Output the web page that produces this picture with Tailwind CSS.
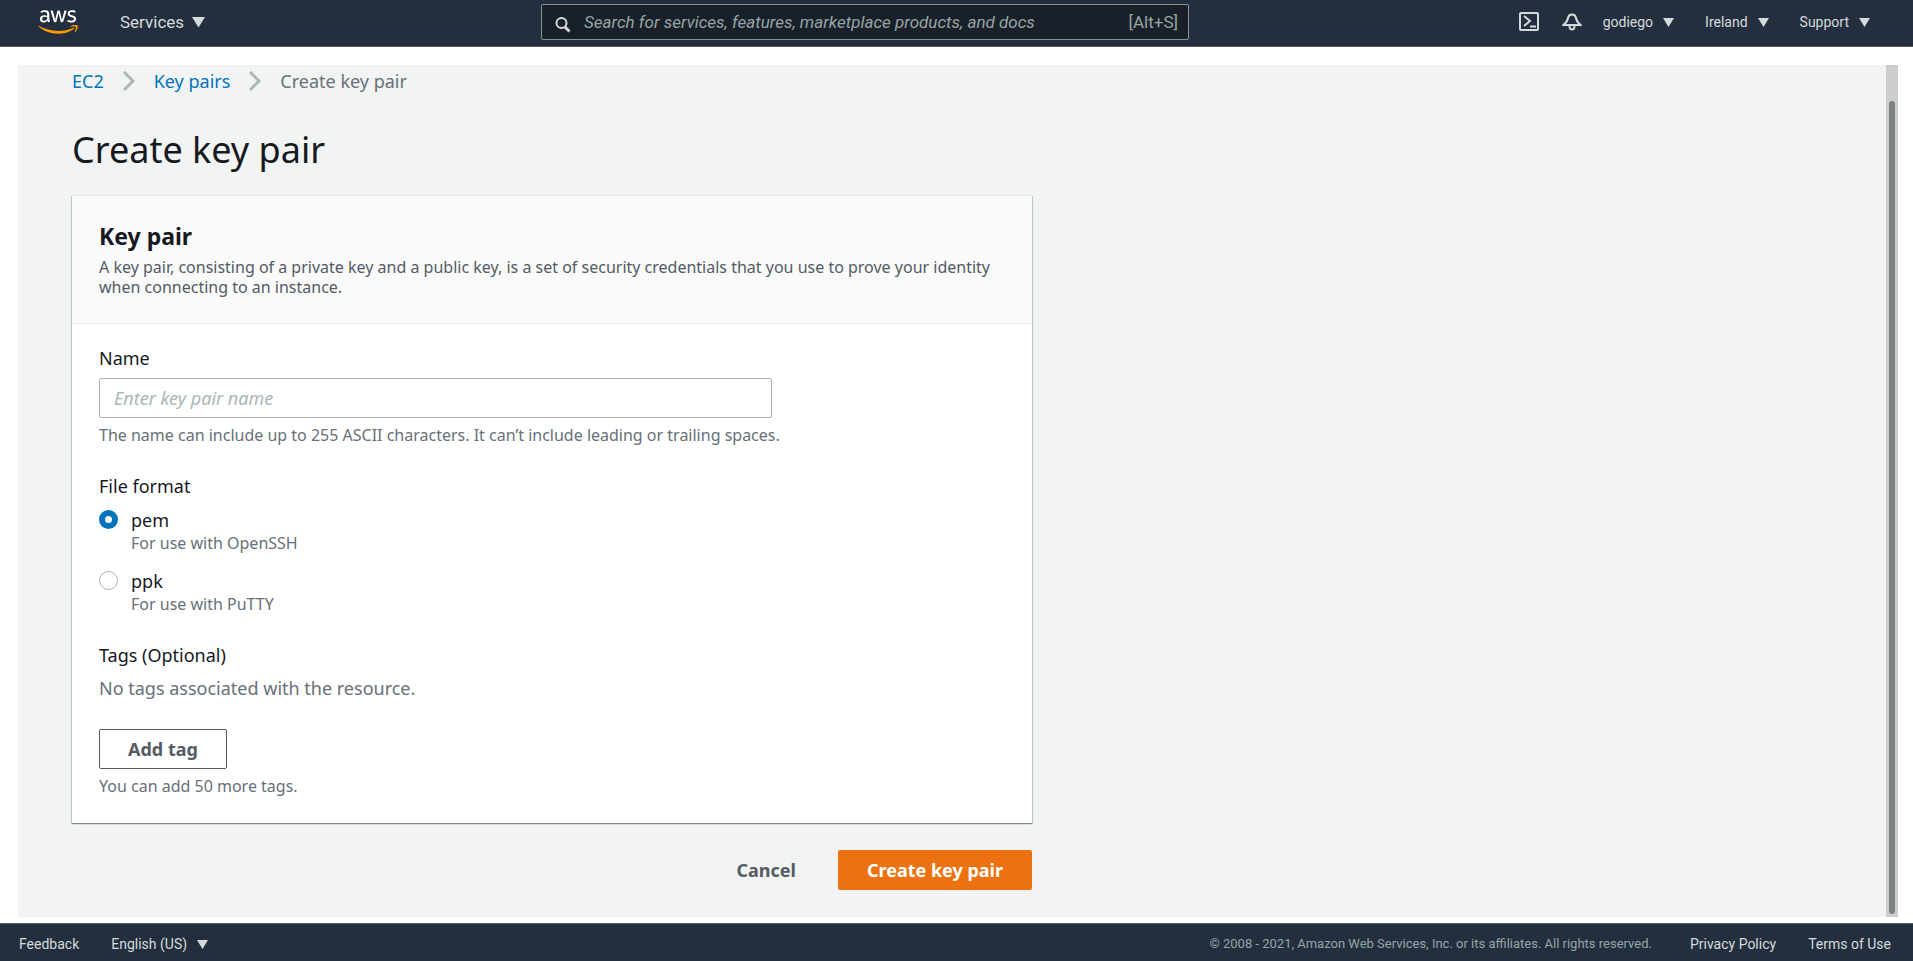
<!DOCTYPE html>
<html lang="en">
<head>
<meta charset="utf-8">
<title>Create key pair</title>
<script src="https://cdn.jsdelivr.net/npm/@tailwindcss/browser@4"></script>
</head>
<body class="flex h-screen flex-col overflow-hidden bg-white font-['Noto_Sans',sans-serif] text-[#16191f]">

<header class="flex h-[47px] shrink-0 items-center border-b border-[#545b64] bg-[#232f3e] pb-[2px] font-[Roboto,sans-serif] text-[#d5dbdb]">
  <div class="flex w-[541px] shrink-0 items-center gap-[42px] pl-[38px]">
    <a href="#" aria-label="AWS home">
      <svg class="block h-6 w-10" viewBox="0 0 304 182" aria-hidden="true">
        <path fill="#fff" d="M86.4 66.4c0 3.7.4 6.7 1.1 8.900.8 2.200 1.800 4.600 3.200 7.200.5.8.7 1.600.7 2.300 0 1-.6 2-1.900 3l-6.300 4.200c-.9.6-1.800.9-2.600.9-1 0-2-.5-3-1.400-1.400-1.500-2.600-3.100-3.600-4.700-1-1.700-2-3.600-3.100-5.900-7.800 9.200-17.600 13.800-29.400 13.800-8.400 0-15.100-2.400-20-7.200-4.900-4.800-7.400-11.200-7.400-19.200 0-8.500 3-15.400 9.100-20.600 6.100-5.200 14.200-7.800 24.500-7.800 3.400 0 6.900.3 10.600.8 3.700.5 7.500 1.300 11.500 2.200v-7.300c0-7.600-1.600-12.900-4.700-16-3.200-3.100-8.600-4.600-16.300-4.600-3.500 0-7.100.4-10.800 1.300-3.700.9-7.300 2-10.800 3.400-1.600.7-2.800 1.100-3.500 1.300-.7.2-1.200.3-1.600.3-1.400 0-2.100-1-2.100-3.100v-4.900c0-1.600.2-2.800.7-3.500.5-.7 1.400-1.400 2.800-2.100 3.500-1.800 7.700-3.300 12.600-4.500 4.900-1.300 10.100-1.900 15.600-1.900 11.900 0 20.600 2.700 26.200 8.100 5.500 5.400 8.300 13.600 8.300 24.600v32.400zM45.800 81.600c3.300 0 6.700-.6 10.300-1.800 3.600-1.200 6.800-3.400 9.500-6.400 1.600-1.900 2.800-4 3.400-6.400.6-2.400 1-5.300 1-8.700v-4.200c-2.900-.7-6-1.300-9.200-1.700-3.200-.4-6.300-.6-9.400-.6-6.700 0-11.600 1.300-14.900 4-3.300 2.700-4.900 6.500-4.900 11.500 0 4.700 1.200 8.200 3.700 10.600 2.400 2.500 5.900 3.700 10.500 3.700zM126.100 92.400c-1.800 0-3-.3-3.800-1-.8-.6-1.500-2-2.100-3.900L96.700 10.200c-.6-2-.9-3.300-.9-4 0-1.600.8-2.500 2.400-2.500h9.800c1.900 0 3.200.3 3.900 1 .8.6 1.400 2 2 3.900l16.800 66.200 15.600-66.200c.5-2 1.100-3.300 1.900-3.900.8-.6 2.200-1 4-1h8c1.900 0 3.200.3 4 1 .8.6 1.500 2 1.900 3.900l15.800 67 17.300-67c.6-2 1.300-3.300 2-3.900.8-.6 2.100-1 3.900-1h9.300c1.600 0 2.500.8 2.500 2.500 0 .5-.1 1-.2 1.600-.1.600-.3 1.400-.7 2.500l-24.100 77.300c-.6 2-1.300 3.300-2.100 3.900-.8.6-2.100 1-3.800 1h-8.600c-1.900 0-3.200-.3-4-1-.8-.7-1.500-2-1.900-4L156 23l-15.400 64.400c-.5 2-1.100 3.300-1.900 4-.8.7-2.200 1-4 1zM254.600 95.100c-5.200 0-10.400-.6-15.400-1.800-5-1.200-8.900-2.500-11.500-4-1.600-.9-2.700-1.900-3.100-2.800-.4-.9-.6-1.900-.6-2.800v-5.100c0-2.100.8-3.100 2.300-3.100.6 0 1.200.1 1.800.3.600.2 1.500.6 2.500 1 3.400 1.500 7.100 2.700 11 3.500 4 .8 7.900 1.200 11.900 1.200 6.300 0 11.200-1.100 14.600-3.300 3.400-2.200 5.200-5.400 5.200-9.500 0-2.800-.9-5.100-2.700-7-1.800-1.900-5.200-3.600-10.100-5.200L246 52c-7.300-2.300-12.700-5.700-16-10.200-3.300-4.400-5-9.300-5-14.500 0-4.200.9-7.900 2.700-11.100 1.800-3.200 4.200-6 7.200-8.200 3-2.300 6.400-4 10.400-5.200 4-1.200 8.200-1.700 12.600-1.700 2.200 0 4.500.1 6.700.4 2.300.3 4.400.7 6.500 1.100 2 .5 3.900 1 5.700 1.600 1.800.6 3.200 1.200 4.200 1.800 1.400.8 2.400 1.600 3 2.500.6.8.9 1.900.9 3.300v4.700c0 2.100-.8 3.200-2.300 3.200-.8 0-2.100-.4-3.800-1.200-5.700-2.600-12.100-3.900-19.200-3.900-5.700 0-10.200.9-13.300 2.800-3.100 1.900-4.700 4.800-4.700 8.900 0 2.800 1 5.200 3 7.100 2 1.900 5.700 3.800 11 5.500l14.200 4.500c7.200 2.300 12.400 5.500 15.500 9.600 3.100 4.100 4.600 8.800 4.600 14 0 4.300-.9 8.200-2.600 11.600-1.800 3.400-4.200 6.400-7.300 8.800-3.100 2.500-6.800 4.300-11.100 5.600-4.500 1.400-9.200 2.100-14.300 2.100z"/>
        <path fill="#f90" d="M273.500 143.700c-32.900 24.300-80.700 37.200-121.800 37.200-57.600 0-109.500-21.300-148.700-56.700-3.100-2.800-.3-6.600 3.400-4.400 42.400 24.600 94.700 39.500 148.800 39.500 36.500 0 76.600-7.600 113.500-23.200 5.500-2.500 10.200 3.600 4.800 7.600zM287.200 128.100c-4.200-5.400-27.800-2.600-38.500-1.300-3.200.4-3.700-2.400-.8-4.500 18.800-13.200 49.700-9.400 53.300-5 3.600 4.500-1 35.400-18.600 50.200-2.700 2.300-5.300 1.100-4.100-1.900 4-9.900 12.900-32.200 8.700-37.500z"/>
      </svg>
    </a>
    <button type="button" class="flex items-center gap-2 text-[17px] leading-5">Services
      <svg class="h-[11px] w-[13px]" viewBox="0 0 13 11" fill="currentColor" aria-hidden="true"><path d="M0 0H13L6.500 10.500Z"/></svg>
    </button>
  </div>

  <label class="flex h-9 min-w-0 max-w-[648px] flex-1 items-center rounded-[2px] border border-[#879596] bg-[#1a2029] px-[10px]">
    <svg class="mt-[6px] mr-3 h-5 w-5 shrink-0" viewBox="0 0 20 20" fill="none" stroke="#d5dbdb" aria-hidden="true"><circle cx="9.500" cy="8" r="5" stroke-width="2"/><path d="M13 12L17.500 16.500" stroke-width="3"/></svg>
    <input type="search" aria-label="Search" placeholder="Search for services, features, marketplace products, and docs" class="min-w-0 flex-1 bg-transparent text-[17px] italic leading-5 outline-none placeholder:text-[#95a5a6]">
    <span class="text-[17px] leading-5 text-[#95a5a6]">[Alt+S]</span>
  </label>

  <nav class="ml-auto flex items-center justify-end pr-[43px] text-[14px] leading-5" aria-label="Account">
    <button type="button" aria-label="CloudShell" class="mr-[23px]">
      <svg class="block h-5 w-5" viewBox="0 0 20 20" fill="none" stroke="currentColor" stroke-width="2" aria-hidden="true"><rect x="1" y="1" width="18" height="17" rx="1"/><path d="M5 4L11 9L5 14M11 14.500H17"/></svg>
    </button>
    <button type="button" aria-label="Notifications" class="mr-[21px]">
      <svg class="block h-5 w-5" viewBox="0 0 20 20" fill="none" stroke="currentColor" stroke-width="2" aria-hidden="true"><path d="M1.500 13C4.500 10.500 5.500 9 6 6C6.500 3 8 2.500 10 2.500S13.500 3 14 6C14.500 9 15.500 10.500 18.500 13Z"/><path d="M7.500 14A2.500 3.500 0 0 0 12.500 14"/></svg>
    </button>
    <button type="button" class="mr-[31px] flex items-center gap-[10px]">godiego
      <svg class="h-[9px] w-[11px]" viewBox="0 0 11 9" fill="currentColor" aria-hidden="true"><path d="M0 0H11L5.500 9Z"/></svg>
    </button>
    <button type="button" class="mr-[31px] flex items-center gap-[10px]">Ireland
      <svg class="h-[9px] w-[11px]" viewBox="0 0 11 9" fill="currentColor" aria-hidden="true"><path d="M0 0H11L5.500 9Z"/></svg>
    </button>
    <button type="button" class="flex items-center gap-[10px]">Support
      <svg class="h-[9px] w-[11px]" viewBox="0 0 11 9" fill="currentColor" aria-hidden="true"><path d="M0 0H11L5.500 9Z"/></svg>
    </button>
  </nav>
</header>

<div class="mt-[18px] mr-[15px] mb-[6px] ml-[18px] flex min-h-0 flex-1 bg-[#f2f3f3]">
  <main class="min-w-0 flex-1 overflow-hidden pl-[54px]">
    <nav aria-label="Breadcrumb" class="flex h-8 items-center gap-[19px] text-[18px] leading-6 text-[#687078]">
      <a href="#" class="text-[#0073bb]">EC2</a>
      <svg class="h-5 w-3" viewBox="0 0 12 20" fill="none" stroke="#aab7b8" stroke-width="3" aria-hidden="true"><path d="M1 1L10 10L1 19"/></svg>
      <a href="#" class="text-[#0073bb]">Key pairs</a>
      <svg class="h-5 w-3" viewBox="0 0 12 20" fill="none" stroke="#aab7b8" stroke-width="3" aria-hidden="true"><path d="M1 1L10 10L1 19"/></svg>
      <span>Create key pair</span>
    </nav>
    <h1 class="mt-[29px] text-4xl leading-[48px]">Create key pair</h1>

    <form class="max-w-[960px]">
      <section class="mt-[21px] bg-white shadow-[0_1px_1px_0_rgba(0,28,36,0.3),1px_1px_1px_0_rgba(0,28,36,0.15),-1px_1px_1px_0_rgba(0,28,36,0.15)]">
        <header class="border-t border-b border-[#eaeded] bg-[#fafafa] px-[27px] pt-6 pb-[26px]">
          <h2 class="text-[23px] leading-8 font-bold">Key pair</h2>
          <p class="mt-[5px] text-base leading-5 text-[#545b64]">A key pair, consisting of a private key and a public key, is a set of security credentials that you use to prove your identity when connecting to an instance.</p>
        </header>
        <div class="px-[27px] pt-[22px] pb-[27px]">
          <label for="name" class="block text-[18px] leading-6">Name</label>
          <input id="name" type="text" placeholder="Enter key pair name" class="mt-2 block h-10 w-full max-w-[673px] rounded-[2px] border border-[#aab7b8] px-[14px] text-[18px] leading-6 placeholder:text-[#aab7b8] placeholder:italic">
          <p class="mt-[7px] text-base leading-5 text-[#687078]">The name can include up to 255 ASCII characters. It can’t include leading or trailing spaces.</p>

          <fieldset class="mt-[29px]">
            <legend class="text-[18px] leading-6">File format</legend>
            <div class="mt-[10px] flex gap-[13px]">
              <input id="pem" type="radio" name="format" checked class="mt-[2px] h-[19px] w-[19px] appearance-none rounded-full border border-[#aab7b8] checked:border-6 checked:border-[#0073bb]">
              <label for="pem" class="text-[18px] leading-6">pem<span class="mt-px block text-base leading-5 text-[#687078]">For use with OpenSSH</span></label>
            </div>
            <div class="mt-4 flex gap-[13px]">
              <input id="ppk" type="radio" name="format" class="mt-[2px] h-[19px] w-[19px] appearance-none rounded-full border border-[#aab7b8] checked:border-6 checked:border-[#0073bb]">
              <label for="ppk" class="text-[18px] leading-6">ppk<span class="mt-px block text-base leading-5 text-[#687078]">For use with PuTTY</span></label>
            </div>
          </fieldset>

          <h3 class="mt-[29px] text-[18px] leading-6">Tags (Optional)</h3>
          <p class="mt-[9px] text-[18px] leading-6 text-[#687078]">No tags associated with the resource.</p>
          <button type="button" class="mt-[29px] block h-10 rounded-[2px] border border-[#545b64] px-7 text-[18px] leading-6 font-bold text-[#545b64]">Add tag</button>
          <p class="mt-[7px] text-base leading-5 text-[#687078]">You can add 50 more tags.</p>
        </div>
      </section>
      <div class="mt-[27px] flex justify-end gap-[14px]">
        <button type="button" class="h-10 px-7 text-[18px] leading-6 font-bold text-[#545b64]">Cancel</button>
        <button type="submit" class="h-10 rounded-[2px] bg-[#ec7211] px-[29px] text-[18px] leading-6 font-bold text-white">Create key pair</button>
      </div>
    </form>
  </main>
  <div class="flex w-3 shrink-0 justify-center bg-[#cdcdcd] pt-9 pb-[3px]" aria-hidden="true">
    <div class="w-[6px] rounded-full bg-[#7e8181]"></div>
  </div>
</div>

<footer class="flex h-[38px] shrink-0 items-center border-t border-[#545b64] bg-[#232f3e] pt-[3px] pr-[22px] pl-[19px] font-[Roboto,sans-serif] text-[14px] leading-5 text-[#d5dbdb]">
  <a href="#" class="mr-8">Feedback</a>
  <button type="button" class="flex items-center gap-[10px]">English (US)
    <svg class="h-[9px] w-[11px]" viewBox="0 0 11 9" fill="currentColor" aria-hidden="true"><path d="M0 0H11L5.500 9Z"/></svg>
  </button>
  <p class="mr-[38px] ml-auto text-[13px] text-[#95a5a6]">© 2008 - 2021, Amazon Web Services, Inc. or its affiliates. All rights reserved.</p>
  <a href="#" class="mr-8">Privacy Policy</a>
  <a href="#">Terms of Use</a>
</footer>
</body>
</html>
